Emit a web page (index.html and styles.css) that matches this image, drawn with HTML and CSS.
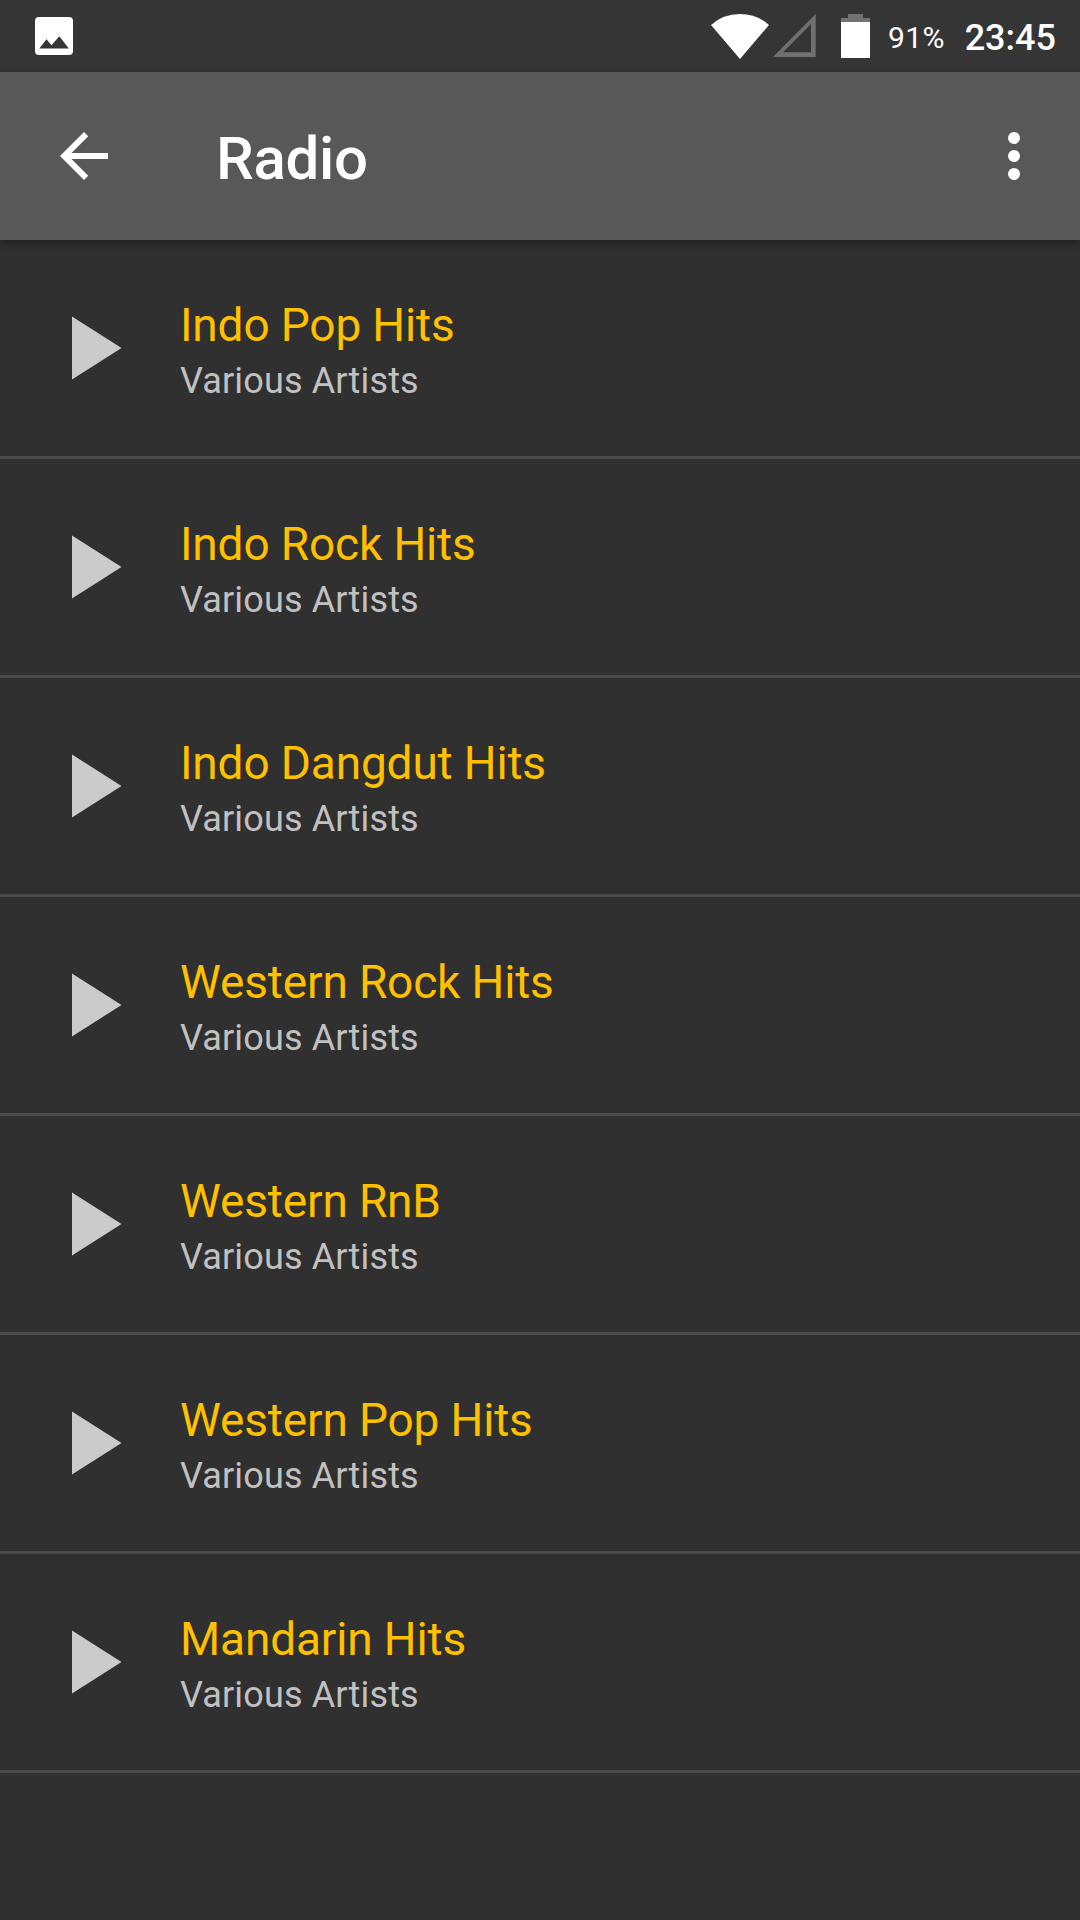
FILE: index.html
```html
<!DOCTYPE html>
<html lang="en">
<head>
    <meta charset="UTF-8">
    <meta name="viewport" content="width=device-width, initial-scale=1.0">
    <title>Radio</title>
    <link rel="stylesheet" href="styles.css">
</head>
<body>
    <div class="statusbar">
        <svg class="photo" width="38" height="38" viewBox="0 0 38 38">
            <rect width="38" height="38" rx="4" fill="#fff"/>
            <path d="M4.3 31.5L11.5 22.3L16.5 28.3L24.3 19.2L33.8 31.5z" fill="#353535"/>
        </svg>
        <svg class="wifi" width="58" height="45" viewBox="0 0 58 45">
            <path d="M29 45L0 11Q12 0 29 0T58 11z" fill="#fff"/>
        </svg>
        <svg class="signal" width="43" height="43" viewBox="0 0 43 43">
            <path d="M0 43H42.7V0zM10 38.3H38V10z" fill="#707070" fill-rule="evenodd"/>
        </svg>
        <svg class="battery" width="29" height="44" viewBox="0 0 29 44">
            <path d="M7 0H22V4H29V8H0V4H7z" fill="#727272"/>
            <path d="M0 8H29V44H0z" fill="#fff"/>
        </svg>
        <span class="percent">91%</span>
        <span class="clock">23:45</span>
    </div>
    <div class="toolbar">
        <svg width="72" height="72" viewBox="0 0 24 24" fill="#fff">
            <path d="M20 11H7.83l5.59-5.59L12 4l-8 8 8 8 1.41-1.41L7.83 13H20v-2z"/>
        </svg>
        <h1 class="title">Radio</h1>
        <svg width="72" height="72" viewBox="0 0 24 24" fill="#fff">
            <circle cx="12" cy="6" r="2"/>
            <circle cx="12" cy="12" r="2"/>
            <circle cx="12" cy="18" r="2"/>
        </svg>
    </div>
    <div class="list" id="stationList"></div>
    <script>
        const stations = [
            "Indo Pop Hits",
            "Indo Rock Hits",
            "Indo Dangdut Hits",
            "Western Rock Hits",
            "Western RnB",
            "Western Pop Hits",
            "Mandarin Hits"
        ];
        const stationList = document.getElementById("stationList");

        for (const station of stations) {
            const row = document.createElement("div");
            row.className = "row";
            row.innerHTML = `
                <svg class="play" width="50" height="64" viewBox="0 0 50 64"><path d="M0 0.5L49.5 32L0 63.5z" fill="#cbcbcb"/></svg>
                <div class="info">
                    <div class="name">${station}</div>
                    <div class="artist">Various Artists</div>
                </div>`;
            stationList.appendChild(row);
        }
    </script>
</body>
</html>
```
FILE: styles.css
```css
body, html {
    height: 100%;
    margin: 0;
    background: #303030;
    font-family: Roboto, sans-serif;
    overflow: hidden;
}

svg {
    display: block;
    flex-shrink: 0;
}

.statusbar {
    display: flex;
    align-items: flex-start;
    height: 72px;
    box-sizing: border-box;
    padding: 14px 24px 0 35px;
    background: #353535;
    color: #fff;
}

.photo {
    margin-top: 3px;
}

.wifi {
    margin-left: auto;
}

.signal {
    margin-left: 4px;
}

.battery {
    margin-left: 25px;
}

.percent {
    margin-left: 18px;
    padding-top: 6px;
    font-size: 30px;
    line-height: 36px;
    letter-spacing: 0.3px;
}

.clock {
    margin-left: 20px;
    padding-top: 4px;
    font-size: 36px;
    line-height: 40px;
    font-weight: 500;
}

.toolbar {
    display: flex;
    align-items: center;
    position: relative;
    height: 168px;
    padding: 0 30px 0 48px;
    background: #585858;
    box-shadow: 0 3px 10px rgba(0, 0, 0, 0.35);
}

.title {
    flex: 1;
    margin: 6px 0 0 96px;
    color: #fff;
    font-size: 60px;
    line-height: 70px;
    font-weight: 500;
    letter-spacing: -0.3px;
}

.row {
    display: flex;
    align-items: center;
    height: 216px;
    padding-left: 72px;
    border-bottom: 3px solid #4a4a4a;
}

.info {
    margin-left: 58px;
    padding-top: 9px;
}

.name {
    color: #ffc000;
    font-size: 46px;
    line-height: 56px;
    letter-spacing: -0.15px;
}

.artist {
    color: #c1c1c1;
    font-size: 36px;
    line-height: 56px;
    letter-spacing: 0.15px;
}
```
